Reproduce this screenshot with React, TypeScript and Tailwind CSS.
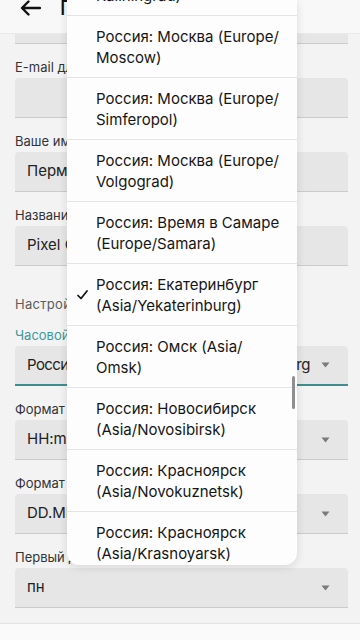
import React from "react";

const items: { l1: string; l2: string; checked?: boolean }[] = [
  { l1: "Россия: Калининград (Europe/", l2: "Kaliningrad)" },
  { l1: "Россия: Москва (Europe/", l2: "Moscow)" },
  { l1: "Россия: Москва (Europe/", l2: "Simferopol)" },
  { l1: "Россия: Москва (Europe/", l2: "Volgograd)" },
  { l1: "Россия: Время в Самаре", l2: "(Europe/Samara)" },
  { l1: "Россия: Екатеринбург", l2: "(Asia/Yekaterinburg)", checked: true },
  { l1: "Россия: Омск (Asia/", l2: "Omsk)" },
  { l1: "Россия: Новосибирск", l2: "(Asia/Novosibirsk)" },
  { l1: "Россия: Красноярск", l2: "(Asia/Novokuznetsk)" },
  { l1: "Россия: Красноярск", l2: "(Asia/Krasnoyarsk)" },
];

function Caret() {
  return (
    <svg width="9" height="6" viewBox="0 0 9 6" className="shrink-0">
      <path d="M0.5 0.5 H8.5 L4.5 5.5 Z" fill="#7a7a7a" />
    </svg>
  );
}

function Field({
  label,
  value,
  select,
  active,
}: {
  label: string;
  value: string;
  select?: boolean;
  active?: boolean;
}) {
  return (
    <div className="mt-[15px] ml-[15px] mr-[12px]">
      <div
        className={
          "text-[13px] leading-[16px] mb-[3px] whitespace-nowrap " +
          (active ? "text-[#3a9a9b]" : "text-[#333333]")
        }
      >
        {label}
      </div>
      <div
        className={
          "h-[40px] bg-[#e6e6e6] rounded-t-[4px] flex items-center pl-[12px] pr-[18px] " +
          (active ? "border-b-2 border-[#3f8d8e]" : "border-b border-[#cbcbcb]")
        }
      >
        <div
          className={
            "flex-1 overflow-hidden whitespace-nowrap text-[15px] text-[#222222] " +
            (active ? "tracking-[-0.6px]" : "")
          }
        >
          {value}
        </div>
        {select && (
          <div className="ml-[10px]">
            <Caret />
          </div>
        )}
      </div>
    </div>
  );
}

export default function App() {
  return (
    <div className="relative w-[360px] h-[640px] overflow-hidden bg-[#f3f3f3] font-['Inter',sans-serif]">
      {/* header */}
      <div className="h-[34px] bg-[#f8f8f8] border-b border-[#e9e9e9]">
        <div className="flex items-center h-[16px] pl-[20px]">
          <svg width="21" height="16" viewBox="0 0 21 16">
            <path
              d="M20 8 H2.5 M8.5 1.5 L2 8 L8.5 14.5"
              fill="none"
              stroke="#111"
              strokeWidth="2.4"
              strokeLinecap="round"
              strokeLinejoin="round"
            />
          </svg>
          <div className="ml-[19px] text-[20px] leading-[16px] font-medium text-[#111] whitespace-nowrap">
            Главная
          </div>
        </div>
      </div>
      {/* partially visible field */}
      <div className="ml-[15px] mr-[12px] h-[10px] bg-[#e6e6e6] border-b border-[#cbcbcb]" />

      <Field label="E-mail для уведомлений" value="" />
      <Field label="Ваше имя" value="Пермь" />
      <Field label="Название устройства" value="Pixel C" />

      <div className="mt-[30px] ml-[15px] text-[13px] leading-[16px] text-[#5c5c5c] tracking-[0.3px]">
        Настройки
      </div>
      <Field
        label="Часовой пояс"
        value="Россия: Екатеринбург (Asia/Yekaterinburg"
        select
        active
      />
      <Field label="Формат времени" value="HH:mm" select />
      <Field label="Формат даты" value="DD.MM.YYYY" select />
      <Field label="Первый день недели" value="пн" select />

      <div className="mt-[15px] h-[40px] border-t border-[#e2e2e2] bg-[#fafafa]" />

      {/* dropdown menu */}
      <div className="absolute left-[67px] top-0 w-[230px] h-[565px] bg-[#fdfdfd] rounded-b-[12px] overflow-hidden shadow-[0_2px_10px_rgba(0,0,0,0.12)]">
        <div className="-mt-[46px]">
          {items.map((it, i) => (
            <div
              key={i}
              className="relative pl-[29px] pr-[6px] pt-[10px] pb-[9px] border-b border-[#e4e4e4] text-[15px] leading-[21px] text-[#161616] whitespace-nowrap"
            >
              {it.checked && (
                <svg
                  width="11"
                  height="10"
                  viewBox="0 0 11 10"
                  className="absolute left-[10px] top-1/2 -translate-y-1/2"
                >
                  <path
                    d="M1 5.5 L4 8.5 L10 1"
                    fill="none"
                    stroke="#111"
                    strokeWidth="1.7"
                    strokeLinecap="round"
                    strokeLinejoin="round"
                  />
                </svg>
              )}
              <div>{it.l1}</div>
              <div>{it.l2}</div>
            </div>
          ))}
        </div>
        <div className="absolute left-[225px] top-[376px] w-[3px] h-[33px] rounded-full bg-[#8f8f8f]" />
      </div>
    </div>
  );
}
